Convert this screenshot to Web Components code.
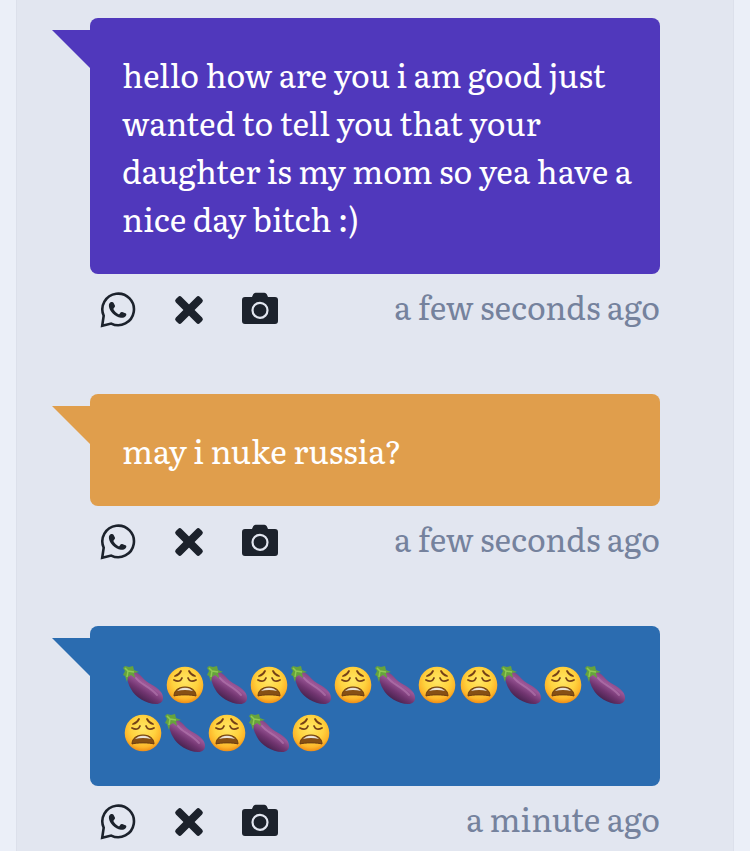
<!DOCTYPE html>
<html lang="en">
<head>
<meta charset="utf-8">
<meta name="viewport" content="width=device-width, initial-scale=1">
<title>Messages</title>
<style>
  body {
    margin: 0;
    background: #ebeff8;
    font-family: Literata, "Liberation Serif", serif;
    font-size: 32px;
    line-height: 48px;
  }
</style>
</head>
<body>
<message-feed>
  <message-card color="#5038bc" time="a few seconds ago">hello how are you i am good just wanted to tell you that your daughter is my mom so yea have a nice day bitch :)</message-card>
  <message-card color="#e09e4c" time="a few seconds ago">may i nuke russia?</message-card>
  <message-card color="#2b6cb0" time="a minute ago"><emoji-row names="eggplant weary eggplant weary eggplant weary eggplant weary weary eggplant weary eggplant weary eggplant weary eggplant weary"></emoji-row></message-card>
</message-feed>

<script>
const ICONS = {
  whatsapp: `
    <path d="M3.7 23.8A15.8 15.8 0 1 1 11.2 31.6L2.2 33.8Z" fill="none" stroke="currentColor" stroke-width="2.6"/>
    <path d="M11.2 10.1c-1.6.6-2.4 2-2.3 3.9.4 5.2 6 10.9 11.9 11.8 2.3.3 4.5-.6 5.3-2.3.5-1.2.2-1.9-.7-2.3l-3.2-1.1c-.7-.2-1.2-.1-1.7.5l-1 1.3c-.4.4-.8.4-1.4.1-1.9-1-3.5-2.5-4.5-4.4-.3-.5-.2-.9.2-1.3l.9-1.2c.4-.5.5-1 .2-1.6l-1.4-2.7c-.5-.8-1.2-1.1-2.3-.7Z" fill="currentColor"/>`,
  close: `
    <g fill="currentColor">
      <rect x="1" y="14" width="34" height="8" rx="2.5" transform="rotate(45 18 18)"/>
      <rect x="1" y="14" width="34" height="8" rx="2.5" transform="rotate(-45 18 18)"/>
    </g>`,
  camera: `
    <path d="M3 5h7l1.2-2.7Q12 .8 13.6.8h8.8q1.6 0 2.4 1.5L26 5h7q3 0 3 3v21q0 3-3 3H3q-3 0-3-3V8q0-3 3-3Z" fill="currentColor"/>
    <circle cx="18" cy="18.3" r="7.5" fill="none" stroke="#e2e6f0" stroke-width="2.2"/>`
};

const EMOJI = {
  eggplant: `
    <defs>
      <linearGradient id="skin" x1=".75" y1=".2" x2=".3" y2=".85">
        <stop offset="0" stop-color="#74356f"/>
        <stop offset=".35" stop-color="#9c5798"/>
        <stop offset=".65" stop-color="#713570"/>
        <stop offset="1" stop-color="#43204b"/>
      </linearGradient>
    </defs>
    <path d="M6 9C10 6 16 8 20 13C25 20 34 21 39 28C43 34 41 40 34 40C24 40 13 33 9 25C6 20 4 13 6 9Z" fill="url(#skin)"/>
    <path d="M14 14C18 20 27 22 35 31" fill="none" stroke="#bd83b7" stroke-width="2" stroke-linecap="round" opacity=".5"/>
    <path d="M1 4 3 2 7 3 11 2 12 6 17 8 12 9 13 14 9 11 6 13 5 18 3 12 1 11 3 7Z" fill="#66a33d"/>
    <path d="M3 4 6 7 12 8M6 7 5 13" fill="none" stroke="#8fca52" stroke-width="1.5"/>`,
  weary: `
    <defs>
      <radialGradient id="face" cx=".5" cy=".38" r=".62">
        <stop offset="0" stop-color="#ffe663"/>
        <stop offset=".55" stop-color="#ffd23e"/>
        <stop offset=".82" stop-color="#fdb52a"/>
        <stop offset="1" stop-color="#ee8c16"/>
      </radialGradient>
    </defs>
    <circle cx="21" cy="21" r="18.3" fill="url(#face)"/>
    <g fill="none" stroke="#744018" stroke-width="1.8" stroke-linecap="round">
      <path d="M11 12Q15 11 17 7M25 7Q27 11 31 12"/>
      <path d="M10 16Q16 19 18 14M24 14Q26 19 32 16"/>
    </g>
    <path d="M10 32C10 26 15 23 21 23S32 26 32 32C28 30.5 14 30.5 10 32Z" fill="#875014" stroke="#6c3d13"/>
    <path d="M13 27C17 22.5 25 22.5 29 27C24 25.5 18 25.5 13 27Z" fill="#e9e2d7"/>`
};

class MessageFeed extends HTMLElement {
  connectedCallback() {
    this.attachShadow({ mode: "open" });
    this.shadowRoot.innerHTML = `
      <style>
        :host {
          display: block;
          padding: 0 16px;
        }
        main {
          display: flex;
          flex-direction: column;
          gap: 48px;
          box-sizing: border-box;
          min-height: 100vh;
          padding: 18px 73px 0;
          background: #e2e6f0;
          border: solid #dce0eb;
          border-width: 0 1px;
        }
      </style>
      <main><slot></slot></main>
    `;
  }
}

class IconButton extends HTMLElement {
  connectedCallback() {
    this.attachShadow({ mode: "open" });
    this.shadowRoot.innerHTML = `
      <style>
        :host { display: flex; }
        button {
          display: flex;
          padding: 0;
          border: 0;
          background: none;
          color: #1c222c;
          cursor: pointer;
        }
        svg { width: 36px; height: 36px; }
      </style>
      <button type="button" aria-label="${this.getAttribute("label")}">
        <svg viewBox="0 0 36 36" aria-hidden="true">${ICONS[this.getAttribute("icon")]}</svg>
      </button>
    `;
  }
}

class EmojiRow extends HTMLElement {
  connectedCallback() {
    const names = this.getAttribute("names").split(" ");
    this.attachShadow({ mode: "open" });
    this.shadowRoot.innerHTML = `
      <style>
        :host {
          display: flex;
          flex-wrap: wrap;
        }
        svg {
          width: 42px;
          height: 42px;
          padding-top: 6px;
        }
      </style>
      ${names.map((name) => `<svg viewBox="0 0 42 42" role="img" aria-label="${name}">${EMOJI[name]}</svg>`).join("")}
    `;
  }
}

class MessageCard extends HTMLElement {
  connectedCallback() {
    this.attachShadow({ mode: "open" });
    this.shadowRoot.innerHTML = `
      <style>
        :host {
          display: block;
          --bubble: ${this.getAttribute("color")};
        }
        .bubble {
          position: relative;
          padding: 32px 24px 32px 32px;
          border-radius: 8px;
          background: var(--bubble);
          color: #fff;
        }
        .bubble::before {
          content: "";
          position: absolute;
          top: 12px;
          right: 100%;
          width: 38px;
          height: 38px;
          background: var(--bubble);
          clip-path: polygon(0 0, 100% 0, 100% 100%);
        }
        footer {
          display: flex;
          align-items: flex-start;
          justify-content: space-between;
          height: 64px;
          padding-top: 8px;
          color: #75829d;
        }
        .actions {
          display: flex;
          gap: 35px;
          padding: 10px;
        }
      </style>
      <div class="bubble"><slot></slot></div>
      <footer>
        <div class="actions">
          <icon-button icon="whatsapp" label="Share on WhatsApp"></icon-button>
          <icon-button icon="close" label="Delete"></icon-button>
          <icon-button icon="camera" label="Save as picture"></icon-button>
        </div>
        <time>${this.getAttribute("time")}</time>
      </footer>
    `;
  }
}

customElements.define("icon-button", IconButton);
customElements.define("emoji-row", EmojiRow);
customElements.define("message-card", MessageCard);
customElements.define("message-feed", MessageFeed);
</script>
</body>
</html>
